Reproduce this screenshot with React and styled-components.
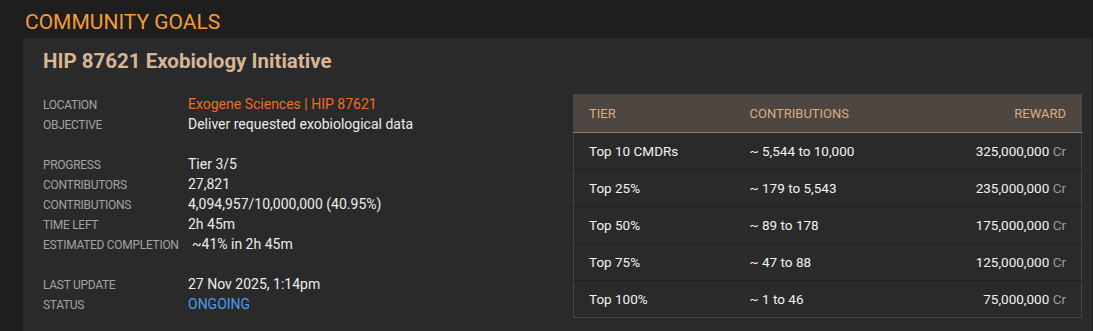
import React from 'react';
import styled, { createGlobalStyle } from 'styled-components';

const GlobalStyle = createGlobalStyle`
    html, body {
        margin: 0;
        padding: 0;
        background: #1e1e1e;
        font-family: Roboto, "Noto Sans", sans-serif;
        color: #e6e6e6;
    }
`;

const info = [
    [
        { label: 'Location', value: 'Exogene Sciences | HIP 87621', tone: 'link' },
        { label: 'Objective', value: 'Deliver requested exobiological data' },
    ],
    [
        { label: 'Progress', value: 'Tier 3/5' },
        { label: 'Contributors', value: '27,821' },
        { label: 'Contributions', value: '4,094,957/10,000,000 (40.95%)' },
        { label: 'Time Left', value: '2h 45m' },
        { label: 'Estimated Completion', value: '~41% in 2h 45m', indent: true },
    ],
    [
        { label: 'Last Update', value: '27 Nov 2025, 1:14pm' },
        { label: 'Status', value: 'ONGOING', tone: 'status' },
    ],
];

const tiers = [
    { tier: 'Top 10 CMDRs', range: '~ 5,544 to 10,000', reward: '325,000,000' },
    { tier: 'Top 25%', range: '~ 179 to 5,543', reward: '235,000,000' },
    { tier: 'Top 50%', range: '~ 89 to 178', reward: '175,000,000' },
    { tier: 'Top 75%', range: '~ 47 to 88', reward: '125,000,000' },
    { tier: 'Top 100%', range: '~ 1 to 46', reward: '75,000,000' },
];

const App = () => {
    return (
        <Page>
            <GlobalStyle />
            <Heading>COMMUNITY GOALS</Heading>
            <Panel>
                <GoalTitle>HIP 87621 Exobiology Initiative</GoalTitle>
                <Body>
                    <InfoColumn>
                        {info.map((group, i) => (
                            <InfoGroup key={i}>
                                {group.map(row => (
                                    <InfoRow key={row.label}>
                                        <Label>{row.label}</Label>
                                        <Value tone={row.tone} $indent={row.indent}>{row.value}</Value>
                                    </InfoRow>
                                ))}
                            </InfoGroup>
                        ))}
                    </InfoColumn>
                    <Table>
                        <colgroup>
                            <col style={{ width: 176 }} />
                            <col style={{ width: 180 }} />
                            <col />
                        </colgroup>
                        <thead>
                            <tr>
                                <HeadCell>Tier</HeadCell>
                                <HeadCell>Contributions</HeadCell>
                                <HeadCell $right>Reward</HeadCell>
                            </tr>
                        </thead>
                        <tbody>
                            {tiers.map(t => (
                                <Row key={t.tier}>
                                    <Cell>{t.tier}</Cell>
                                    <Cell>{t.range}</Cell>
                                    <Cell $right>{t.reward} <Unit>Cr</Unit></Cell>
                                </Row>
                            ))}
                        </tbody>
                    </Table>
                </Body>
            </Panel>
        </Page>
    );
};

export default App;

// Styles
const Page = styled.div`
    padding: 10px 1px 0 23px;
`;

const Heading = styled.h1`
    margin: 0 0 4px 2px;
    font-size: 21px;
    line-height: 24px;
    font-weight: 400;
    color: #f59b35;
`;

const Panel = styled.section`
    background: #2a2a2a;
    border-radius: 3px 3px 0 0;
    padding: 10px 10px 14px 20px;
    min-height: 280px;
    box-sizing: border-box;
`;

const GoalTitle = styled.h2`
    margin: 0;
    font-size: 20.5px;
    line-height: 26px;
    font-weight: 700;
    color: #d8b596;
`;

const Body = styled.div`
    display: flex;
    align-items: flex-start;
    justify-content: space-between;
    margin-top: 20px;
`;

const InfoColumn = styled.div`
    display: flex;
    flex-direction: column;
    gap: 20px;
    padding-top: 2px;
`;

const InfoGroup = styled.div`
    display: flex;
    flex-direction: column;
`;

const InfoRow = styled.div`
    display: flex;
    align-items: baseline;
    height: 20px;
`;

const Label = styled.span`
    width: 145px;
    font-size: 12px;
    letter-spacing: -0.3px;
    text-transform: uppercase;
    color: #a3a3a3;
`;

const valueColors = {
    link: '#f26a24',
    status: '#4a9bf0',
};

const Value = styled.span`
    font-size: 14px;
    color: ${props => valueColors[props.tone] || '#ececec'};
    padding-left: ${props => (props.$indent ? '4px' : '0')};
`;

const Table = styled.table`
    width: 509px;
    table-layout: fixed;
    border-collapse: collapse;
    border: 1px solid #4b4540;
    font-size: 13.5px;
`;

const HeadCell = styled.th`
    height: 37px;
    padding: 0 15px;
    background: #4e4640;
    border-bottom: 1px solid #8a7e74;
    font-size: 13px;
    font-weight: 400;
    text-transform: uppercase;
    text-align: ${props => (props.$right ? 'right' : 'left')};
    color: #dcac82;

    &:nth-child(2) {
        padding-left: 0;
    }
`;

const Row = styled.tr`
    border-top: 1px solid #222;

    &:first-child {
        border-top: none;
    }
`;

const Cell = styled.td`
    height: 36px;
    padding: 0 15px;
    font-weight: 400;
    color: #f2f2f2;
    text-align: ${props => (props.$right ? 'right' : 'left')};

    &:nth-child(2) {
        padding-left: 0;
    }
`;

const Unit = styled.span`
    color: #9a9a9a;
`;
